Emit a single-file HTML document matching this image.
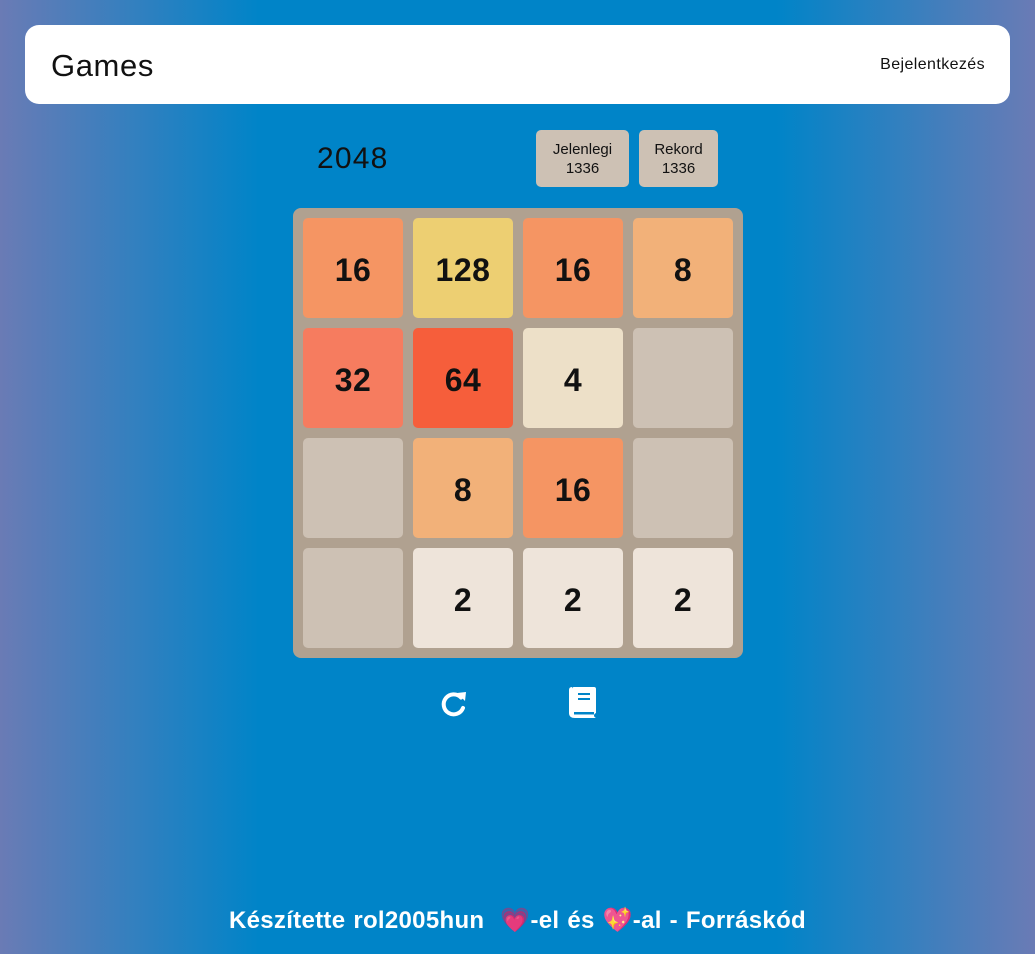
<!DOCTYPE html>
<html><head><meta charset="utf-8"><style>
body{margin:0;width:1035px;height:954px;overflow:hidden;font-family:"Liberation Sans",sans-serif;background:linear-gradient(90deg,#6a7bb5 0%,#0084c8 25%,#0084c8 75%,#6a7bb5 100%);position:relative}
.hdr{position:absolute;left:25px;top:25px;width:985px;height:79px;background:#fff;border-radius:14px}
.hdr .t{position:absolute;left:26px;top:23px;font-size:31px;color:#111;letter-spacing:0.6px}
.hdr .l{position:absolute;right:25px;top:31px;font-size:16px;color:#111;letter-spacing:0.4px}
.title{position:absolute;left:317px;top:142px;font-size:30px;color:#111;letter-spacing:1.2px}
.sc{position:absolute;top:130px;height:57px;background:#cdc1b4;border-radius:5px;text-align:center;font-size:15px;color:#111;line-height:19px;padding-top:10px;box-sizing:border-box}
.grid{position:absolute;left:293px;top:208px;width:450px;height:450px;background:#b0a190;border-radius:8px}
.tile{position:absolute;width:100px;height:100px;border-radius:5px;background:#cdc1b4;font-weight:bold;font-size:32px;line-height:104px;text-align:center;color:#111;letter-spacing:0.5px}
.foot{position:absolute;left:0;width:1035px;top:906px;text-align:center;color:#fff;font-weight:bold;font-size:24px;letter-spacing:0.3px;word-spacing:1px}
</style></head><body>
<div class="hdr"><div class="t">Games</div><div class="l">Bejelentkezés</div></div>
<div class="title">2048</div>
<div class="sc" style="left:536px;width:93px">Jelenlegi<br>1336</div>
<div class="sc" style="left:639px;width:79px">Rekord<br>1336</div>
<div class="grid">
<div class="tile" style="left:10px;top:10px;background:#f59563">16</div>
<div class="tile" style="left:120px;top:10px;background:#edcf72">128</div>
<div class="tile" style="left:230px;top:10px;background:#f59563">16</div>
<div class="tile" style="left:340px;top:10px;background:#f2b179">8</div>
<div class="tile" style="left:10px;top:120px;background:#f67c5f">32</div>
<div class="tile" style="left:120px;top:120px;background:#f65e3b">64</div>
<div class="tile" style="left:230px;top:120px;background:#ede0c8">4</div>
<div class="tile" style="left:340px;top:120px"></div>
<div class="tile" style="left:10px;top:230px"></div>
<div class="tile" style="left:120px;top:230px;background:#f2b179">8</div>
<div class="tile" style="left:230px;top:230px;background:#f59563">16</div>
<div class="tile" style="left:340px;top:230px"></div>
<div class="tile" style="left:10px;top:340px"></div>
<div class="tile" style="left:120px;top:340px;background:#eee4da">2</div>
<div class="tile" style="left:230px;top:340px;background:#eee4da">2</div>
<div class="tile" style="left:340px;top:340px;background:#eee4da">2</div>
</div>
<svg style="position:absolute;left:439px;top:688px" width="30" height="30" viewBox="0 0 30 30"><path d="M22 9.5A10 10 0 1 0 24 20" fill="none" stroke="#fff" stroke-width="4" stroke-linecap="round"/><path d="M18 5L27 4L26 13Z" fill="#fff"/></svg>
<svg style="position:absolute;left:568px;top:686px" width="30" height="34" viewBox="0 0 30 34"><path d="M4 3Q4 1 6 1H26Q28 1 28 3V27Q26 28 26 29.5Q26 31 28 32H7Q1 32 1 27V4Q1 1 4 1Z" fill="#fff"/><rect x="6" y="26" width="20" height="2.5" fill="#0084c8"/><rect x="10" y="7" width="12" height="2" fill="#0084c8"/><rect x="10" y="12" width="12" height="2" fill="#0084c8"/></svg>
<div class="foot">Készítette rol2005hun &nbsp;💗-el és 💖-al - Forráskód</div>
</body></html>
